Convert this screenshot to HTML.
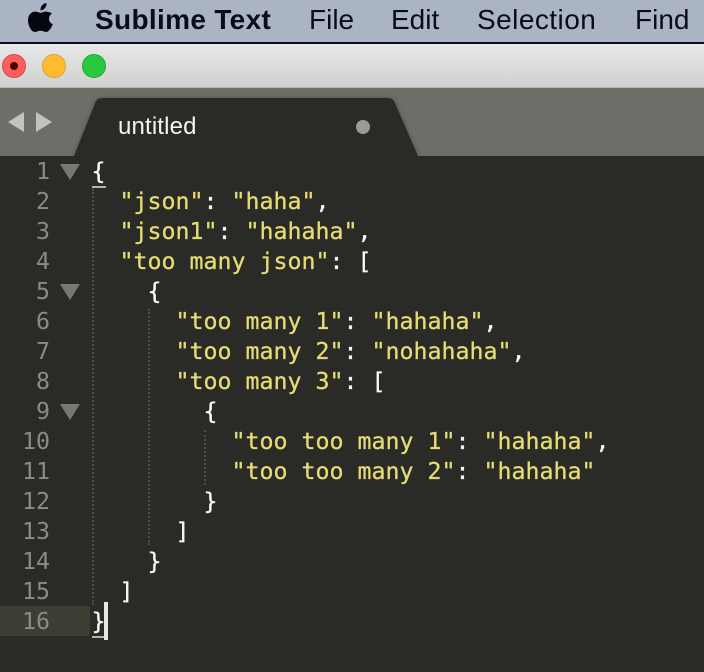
<!DOCTYPE html>
<html><head><meta charset="utf-8">
<style>
html,body{margin:0;padding:0;background:#2a2b26}
#r{position:relative;width:704px;height:672px;overflow:hidden;background:#2a2b26}
#r div{position:absolute}
.m{font-family:"Liberation Sans",sans-serif;font-size:28px;color:#0a0c1c;top:5px;line-height:30px;white-space:pre}
.l{left:0;width:50px;text-align:right;font:23.25px/30px "DejaVu Sans Mono",monospace;color:#8b8b86;height:30px}
.c{left:91.5px;font:23.25px/30px "DejaVu Sans Mono",monospace;color:#f8f8f2;white-space:pre;height:30px;-webkit-text-stroke:.3px currentColor}
.c b{font-weight:normal;color:#e6db74}
.g{width:0;border-left:2px dotted #4c4d47}
.f{width:0;height:0;border-left:10px solid transparent;border-right:10px solid transparent;border-top:16px solid #777873;left:60px}
</style></head><body><div id="r">
<div style="left:0;top:0;width:704px;height:42px;background:#abb4c4"></div>
<div style="left:0;top:42px;width:704px;height:2px;background:#0a0c1c"></div>
<svg style="position:absolute;left:28px;top:2px" width="26" height="33" viewBox="0 0 26 33"><path fill="#05060f" d="M18.5 1c.2 2.300-.6 4-1.700 5.300-1.100 1.300-2.700 2.200-4.300 2-.2-2 .7-3.900 1.700-5C15.300 2 17 1.200 18.500 1zM24 11.500c-2 1.300-3 3-3 5.200 0 2.500 1.300 4.300 3.800 5.400-.7 2-1.600 3.700-2.800 5.300-1.300 1.700-2.500 2.600-4 2.600-1 0-1.800-.3-2.800-.7-.9-.4-1.800-.6-2.800-.6s-2 .2-3 .7c-.9.400-1.700.6-2.500.6-1.500 0-3-1.100-4.400-3.100C.9 24.300 0 21.300 0 18.500c0-3 .9-5.300 2.500-6.900 1.300-1.300 2.900-2 4.700-2 1 0 2.100.3 3.200.7.900.3 1.600.5 2 .5.500 0 1.300-.2 2.300-.6 1.200-.4 2.400-.7 3.400-.6 2.600.1 4.500 1 5.900 1.900z"/></svg>
<div class="m" style="left:95px;font-weight:bold;letter-spacing:.33px">Sublime Text</div>
<div class="m" style="left:309px">File</div>
<div class="m" style="left:391px">Edit</div>
<div class="m" style="left:477px;letter-spacing:.45px">Selection</div>
<div class="m" style="left:635px">Find</div>

<div style="left:0;top:44px;width:704px;height:43px;background:linear-gradient(#e8e8e8,#d0d0d0);border-bottom:1px solid #b5b5b1"></div>
<div style="left:2px;top:54px;width:22px;height:22px;border-radius:50%;background:#fc5f5c;border:1px solid #e0443e"></div>
<div style="left:10px;top:62px;width:8px;height:8px;border-radius:50%;background:#4d0000"></div>
<div style="left:42px;top:54px;width:22px;height:22px;border-radius:50%;background:#febc2f;border:1px solid #dea034"></div>
<div style="left:82px;top:54px;width:22px;height:22px;border-radius:50%;background:#2cc741;border:1px solid #1dad2b"></div>

<div style="left:0;top:88px;width:704px;height:68px;background:#6d6e68"></div>
<svg style="position:absolute;left:0;top:88px" width="704" height="68" viewBox="0 0 704 68"><defs><filter id="s" x="-10%" y="-10%" width="120%" height="120%"><feGaussianBlur stdDeviation="2"/></filter></defs><path d="M74 68 L96 13 Q98 10 103 10 L387 10 Q392 10 394 13 L418 68 Z" fill="#4a4b46" filter="url(#s)"/><path d="M74 68 L96 13 Q98 10 103 10 L387 10 Q392 10 394 13 L418 68 Z" fill="#2a2b26"/></svg>
<div style="left:8px;top:112px;width:0;height:0;border-top:10px solid transparent;border-bottom:10px solid transparent;border-right:16px solid #c2c2bf"></div>
<div style="left:36px;top:112px;width:0;height:0;border-top:10px solid transparent;border-bottom:10px solid transparent;border-left:16px solid #c2c2bf"></div>
<div style="left:118px;top:112px;font:24px/30px 'Liberation Sans',sans-serif;color:#f2f2f0;white-space:pre;letter-spacing:.15px">untitled</div>
<div style="left:356px;top:120px;width:14px;height:14px;border-radius:50%;background:#9b9b98"></div>

<div style="left:0;top:606px;width:90px;height:30px;background:#3d3e33"></div>
<div class="l" style="top:157px">1</div><div class="l" style="top:187px">2</div><div class="l" style="top:217px">3</div><div class="l" style="top:247px">4</div><div class="l" style="top:277px">5</div><div class="l" style="top:307px">6</div><div class="l" style="top:337px">7</div><div class="l" style="top:367px">8</div><div class="l" style="top:397px">9</div><div class="l" style="top:427px">10</div><div class="l" style="top:457px">11</div><div class="l" style="top:487px">12</div><div class="l" style="top:517px">13</div><div class="l" style="top:547px">14</div><div class="l" style="top:577px">15</div><div class="l" style="top:607px">16</div>
<div class="f" style="top:164px"></div><div class="f" style="top:284px"></div><div class="f" style="top:404px"></div>

<div class="g" style="left:92px;top:189px;height:416px"></div>
<div class="g" style="left:148px;top:309px;height:236px"></div>
<div class="g" style="left:204px;top:430px;height:55px"></div>
<div style="left:92px;top:186px;width:14px;height:2px;background:#b4b4b0"></div>
<div style="left:92px;top:636px;width:14px;height:2px;background:#b4b4b0"></div>

<div class="c" style="top:157px">{</div>
<div class="c" style="top:187px">  <b>"json"</b>: <b>"haha"</b>,</div>
<div class="c" style="top:217px">  <b>"json1"</b>: <b>"hahaha"</b>,</div>
<div class="c" style="top:247px">  <b>"too many json"</b>: [</div>
<div class="c" style="top:277px">    {</div>
<div class="c" style="top:307px">      <b>"too many 1"</b>: <b>"hahaha"</b>,</div>
<div class="c" style="top:337px">      <b>"too many 2"</b>: <b>"nohahaha"</b>,</div>
<div class="c" style="top:367px">      <b>"too many 3"</b>: [</div>
<div class="c" style="top:397px">        {</div>
<div class="c" style="top:427px">          <b>"too too many 1"</b>: <b>"hahaha"</b>,</div>
<div class="c" style="top:457px">          <b>"too too many 2"</b>: <b>"hahaha"</b></div>
<div class="c" style="top:487px">        }</div>
<div class="c" style="top:517px">      ]</div>
<div class="c" style="top:547px">    }</div>
<div class="c" style="top:577px">  ]</div>
<div class="c" style="top:607px">}</div>
<div style="left:104px;top:602px;width:4px;height:38px;background:#e8e8e0"></div>
</div></body></html>
